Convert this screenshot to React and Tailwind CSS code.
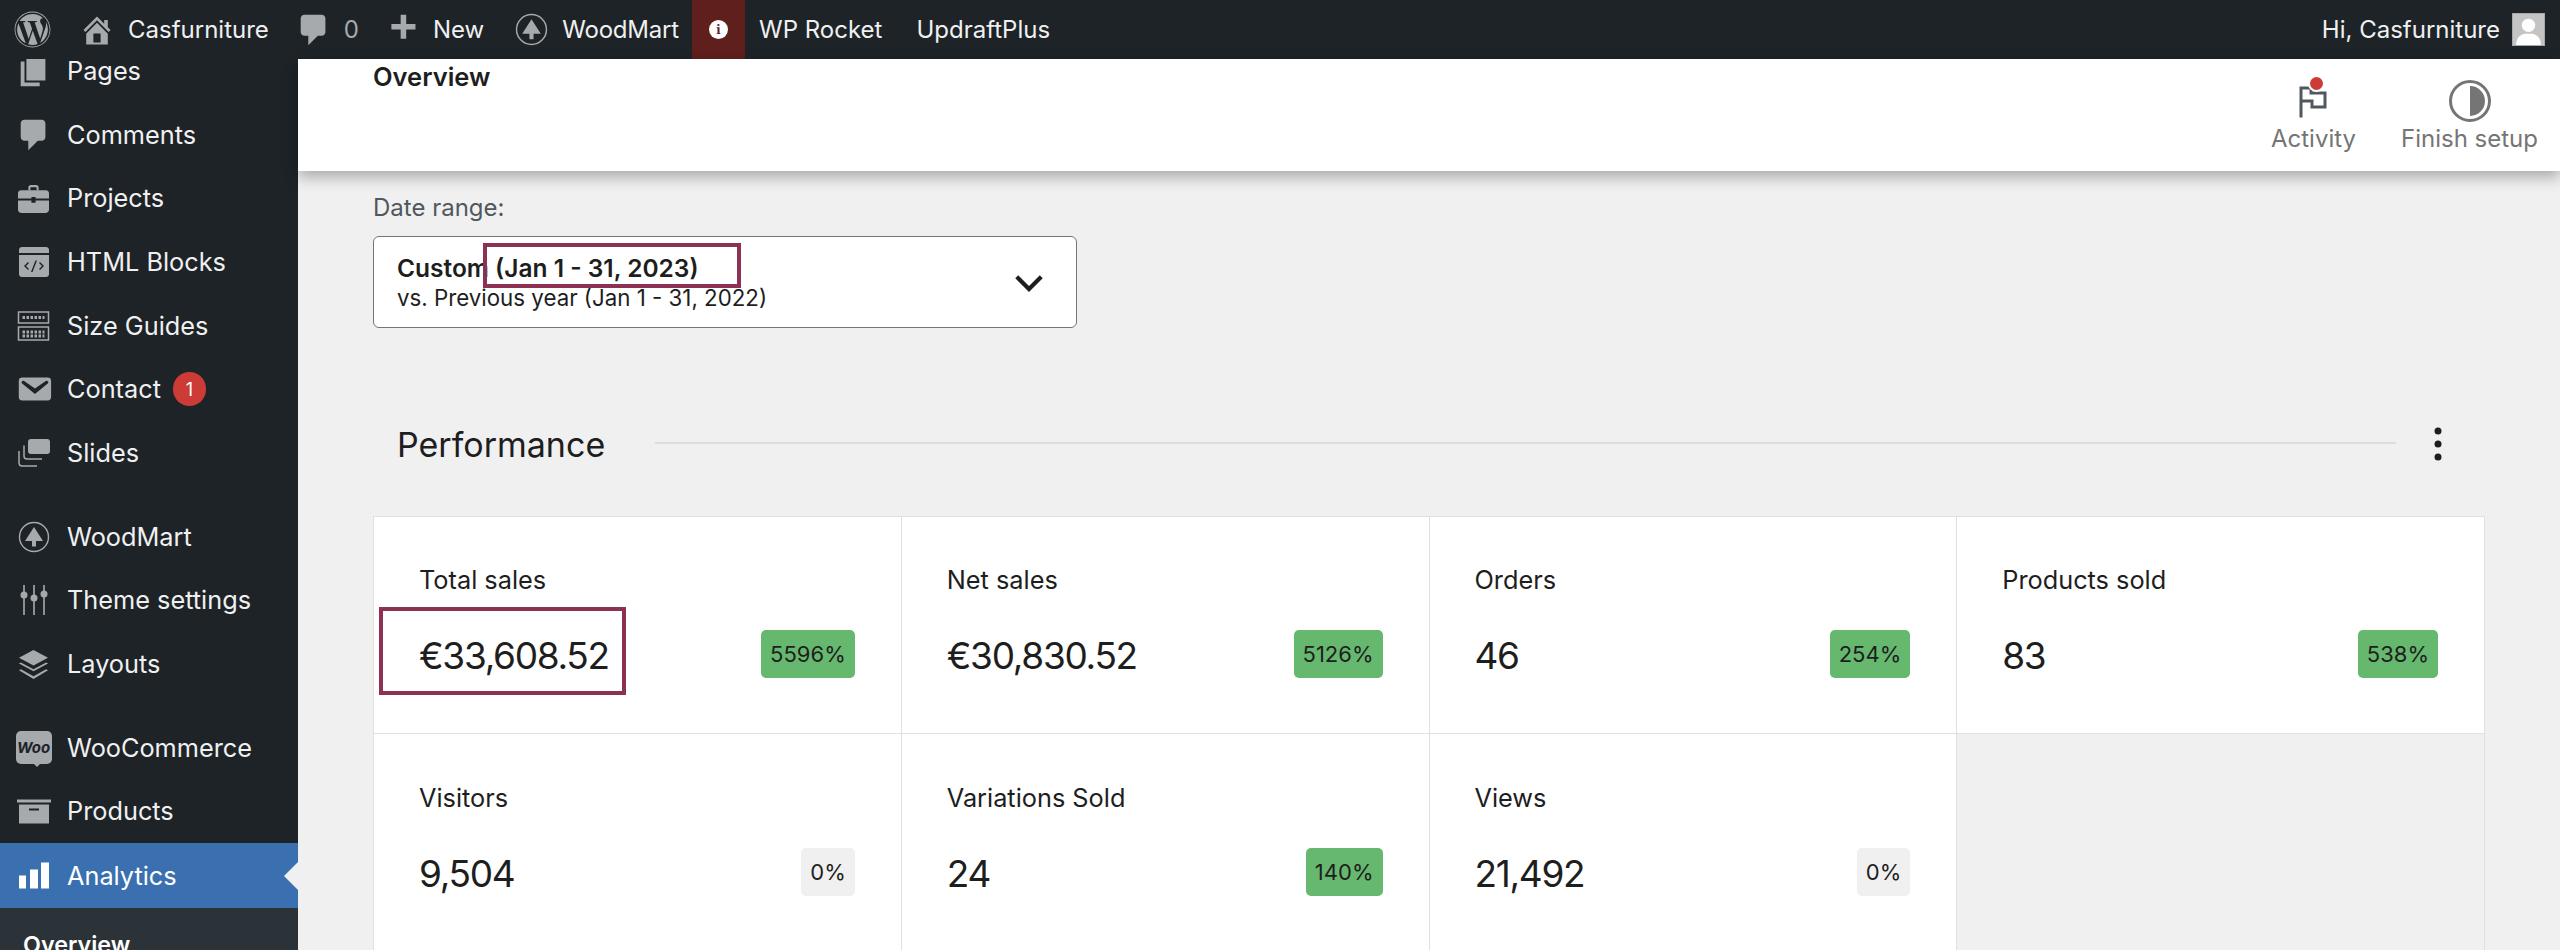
import { FaWordpress } from 'react-icons/fa';

const font = { fontFamily: 'Inter, "Liberation Sans", sans-serif' };

const Dash = ({ d, className }) => (
  <svg viewBox="0 0 20 20" className={className} fill="currentColor">
    <path d={d} />
  </svg>
);

const HOME = 'M16 8.5l1.53 1.53-1.06 1.06L10 4.62l-6.47 6.47-1.06-1.06L10 2.5l4 4v-2h2v4zm-6-2.46l6 5.99V18H4v-5.97zM12 17v-5H8v5h4z';
const COMMENT = 'M5 2h9c1.1 0 2 .9 2 2v7c0 1.1-.9 2-2 2h-2l-5 5v-5H5c-1.1 0-2-.9-2-2V4c0-1.1.9-2 2-2z';
const PLUS = 'M17 7v3h-5v5H9v-5H4V7h5V2h3v5h5z';
const PAGE = 'M6 15V2h10v13H6zm-1 1h8v2H3V5h2v11z';
const MAIL = 'M3.87 4h13.25C18.37 4 19 4.59 19 5.79v8.42c0 1.19-.63 1.79-1.88 1.79H3.87c-1.25 0-1.88-.6-1.88-1.79V5.79c0-1.2.63-1.79 1.88-1.79zm6.62 8.6l6.74-5.53c.24-.2.43-.66.13-1.07-.29-.41-.82-.42-1.17-.17l-5.7 3.86L4.8 5.83c-.35-.25-.88-.24-1.17.17-.3.41-.11.87.13 1.07z';

const TreeIcon = ({ className }) => (
  <svg viewBox="0 0 32 32" className={className} fill="none">
    <circle cx="16" cy="16" r="14.5" stroke="currentColor" strokeWidth="1.4" />
    <path d="M16 6L25 20H18V25.500H14V20H7z" fill="currentColor" />
  </svg>
);

const ProjectsIcon = ({ className }) => (
  <svg viewBox="0 0 30 28" className={className} fill="currentColor">
    <path d="M10 6V3.5C10 2 11 1 12.5 1h5C19 1 20 2 20 3.5V6h-2V3.5c0-.3-.2-.5-.5-.5h-5c-.3 0-.5.2-.5.5V6z" />
    <path d="M3 6h24c1.5 0 3 1.2 3 3v5H17v-1.5h-4V14H0V9c0-1.800 1.500-3 3-3z" />
    <path d="M0 16h13v2h4v-2h13v9c0 1.500-1.500 3-3 3H3c-1.500 0-3-1.500-3-3z" />
  </svg>
);

const HtmlIcon = ({ className }) => (
  <svg viewBox="0 0 30 30" className={className} fill="currentColor">
    <path d="M3 0h24c1.700 0 3 1.300 3 3v3H0V3c0-1.700 1.300-3 3-3z" />
    <path fillRule="evenodd" d="M0 8h30v19c0 1.700-1.300 3-3 3H3c-1.700 0-3-1.300-3-3zm9 7l-4 4 4 4 1-1-3-3 3-3zm12 0l-1 1 3 3-3 3 1 1 4-4zM16.500 13.500L12 25h1.500L18 13.500z" />
  </svg>
);

const SizeIcon = ({ className }) => (
  <svg viewBox="0 0 32 30" className={className} fill="none" stroke="currentColor" strokeWidth="1.500">
    <rect x="1" y="1" width="30" height="11" />
    <rect x="1" y="16" width="30" height="13" />
    <path d="M5 6.500h22M5 21h22M5 25h22" strokeWidth="3" strokeDasharray="2.500 1.500" />
  </svg>
);

const SlidesIcon = ({ className }) => (
  <svg viewBox="0 0 32 28" className={className} fill="none" stroke="currentColor" strokeWidth="1.500">
    <rect x="10" y="0" width="22" height="15" rx="3" fill="currentColor" stroke="none" />
    <path d="M6 6.500V17c0 2 1 3 3 3h15" />
    <path d="M1 12v11.500c0 2 1 3.500 3 3.500h15" />
  </svg>
);

const SlidersIcon = ({ className }) => (
  <svg viewBox="0 0 30 30" className={className} fill="currentColor">
    <path d="M4.200 0h1.600v30H4.200zM14.200 0h1.600v30h-1.600zM24.200 0h1.600v30h-1.600z" />
    <circle cx="5" cy="10" r="3.500" />
    <circle cx="15" cy="13" r="3.500" />
    <circle cx="25" cy="9" r="3.500" />
  </svg>
);

const LayersIcon = ({ className }) => (
  <svg viewBox="0 0 32 32" className={className} fill="currentColor">
    <path d="M16 1l15 8-15 8-15-8z" />
    <path d="M1 15l2-1 13 7 13-7 2 1-15 8z" />
    <path d="M1 22l2-1 13 7 13-7 2 1-15 9z" />
  </svg>
);

const WooIcon = ({ className }) => (
  <div className={`relative flex items-center justify-center rounded-[5px] bg-[#a7aaad] ${className}`}>
    <span className="text-[15px] font-bold italic leading-none text-[#1d2327]">Woo</span>
    <span className="absolute bottom-[-3px] left-[17px] h-0 w-0 border-x-[4px] border-t-[4px] border-x-transparent border-t-[#a7aaad]" />
  </div>
);

const ProductsIcon = ({ className }) => (
  <svg viewBox="0 0 34 24" className={className} fill="currentColor">
    <path d="M0 0h34v3H0z" />
    <path fillRule="evenodd" d="M2 5h30v19H2zm10 4v2h10V9z" />
  </svg>
);

const BarsIcon = ({ className }) => (
  <svg viewBox="0 0 30 26" className={className} fill="currentColor">
    <path d="M0 13h7v13H0zM11 7h8v19h-8zM22 0h8v26h-8z" />
  </svg>
);

const MenuItem = ({ icon, label, badge }) => (
  <div className="flex h-[63.7px] items-center">
    <div className="flex w-[67px] shrink-0 items-center justify-center text-[#a7aaad]">{icon}</div>
    <span className="text-[25.3px] text-[#f0f0f1]">{label}</span>
    {badge && (
      <span className="ml-[12px] flex h-[34px] w-[33px] items-center justify-center rounded-full bg-[#cc3b36] text-[18px] text-white">
        {badge}
      </span>
    )}
  </div>
);

const Sidebar = () => (
  <aside className="flex w-[298px] shrink-0 flex-col overflow-hidden bg-[#1d2327]">
    <div className="-mt-[20px]">
      <MenuItem icon={<Dash d={PAGE} className="h-[38px] w-[38px]" />} label="Pages" />
      <MenuItem icon={<Dash d={COMMENT} className="h-[38px] w-[38px]" />} label="Comments" />
      <MenuItem icon={<ProjectsIcon className="h-[29px] w-[31px]" />} label="Projects" />
      <MenuItem icon={<HtmlIcon className="h-[30px] w-[30px]" />} label="HTML Blocks" />
      <MenuItem icon={<SizeIcon className="h-[30px] w-[33px]" />} label="Size Guides" />
      <MenuItem icon={<Dash d={MAIL} className="h-[38px] w-[38px]" />} label="Contact" badge="1" />
      <MenuItem icon={<SlidesIcon className="h-[28px] w-[32px]" />} label="Slides" />
      <div className="h-[20px]" />
      <MenuItem icon={<TreeIcon className="h-[32px] w-[32px]" />} label="WoodMart" />
      <MenuItem icon={<SlidersIcon className="h-[30px] w-[30px]" />} label="Theme settings" />
      <MenuItem icon={<LayersIcon className="h-[31px] w-[31px]" />} label="Layouts" />
      <div className="h-[20px]" />
      <MenuItem icon={<WooIcon className="h-[33px] w-[36px]" />} label="WooCommerce" />
      <MenuItem icon={<ProductsIcon className="h-[25px] w-[34px]" />} label="Products" />
      <div className="relative flex h-[65px] items-center bg-[#3b70b0]">
        <div className="flex w-[67px] shrink-0 items-center justify-center text-white">
          <BarsIcon className="h-[29px] w-[30px]" />
        </div>
        <span className="text-[25.3px] text-white">Analytics</span>
        <span className="absolute right-0 top-[19px] h-0 w-0 border-y-[14px] border-r-[14px] border-y-transparent border-r-[#f0f0f1]" />
      </div>
      <div className="h-[60px] bg-[#2c3338] pl-[23px] pt-[22px] text-[23.3px] font-semibold leading-[30px] text-white">Overview</div>
    </div>
  </aside>
);

const TopBar = () => (
  <header className="flex h-[59px] shrink-0 items-center bg-[#1d2327] text-[24px] text-[#f0f0f1]">
    <div className="flex w-[64px] justify-center text-[#a7aaad]">
      <FaWordpress className="h-[37px] w-[37px]" />
    </div>
    <div className="flex items-center pl-[15px]">
      <Dash d={HOME} className="mr-[13px] h-[36px] w-[36px] text-[#a7aaad]" />
      <span>Casfurniture</span>
    </div>
    <div className="ml-[26px] flex items-center">
      <Dash d={COMMENT} className="h-[38px] w-[38px] text-[#a7aaad]" />
      <span className="ml-[11px] text-[#a7aaad]">0</span>
    </div>
    <div className="ml-[25px] flex items-center">
      <Dash d={PLUS} className="mr-[12px] h-[37px] w-[37px] text-[#a7aaad]" />
      <span>New</span>
    </div>
    <div className="ml-[31px] flex items-center">
      <TreeIcon className="mr-[14px] h-[33px] w-[33px] text-[#a7aaad]" />
      <span className="tracking-[-0.2px]">WoodMart</span>
    </div>
    <div className="ml-[13px] flex h-full w-[53px] items-center justify-center bg-[#5f1f1c]">
      <span className="flex h-[19px] w-[19px] items-center justify-center rounded-full bg-white font-serif text-[14px] font-bold text-[#5f1f1c]">i</span>
    </div>
    <span className="ml-[14px]">WP Rocket</span>
    <span className="ml-[34px]">UpdraftPlus</span>
    <div className="ml-auto flex items-center pr-[15px]">
      <span>Hi, Casfurniture</span>
      <div className="ml-[12px] flex h-[33px] w-[33px] items-end justify-center overflow-hidden border border-[#a7aaad] bg-[#c4c4c4]">
        <svg viewBox="0 0 30 30" className="h-full w-full" fill="#fff">
          <circle cx="15" cy="11" r="6.500" />
          <path d="M3 30c0-7 4-10 8-11h8c4 1 8 4 8 11z" />
        </svg>
      </div>
    </div>
  </header>
);

const PageHeader = () => (
  <div className="relative z-10 flex h-[112px] shrink-0 justify-between bg-white pl-[75px] shadow-[0_6px_14px_rgba(0,0,0,0.3)]">
    <h1 className="pt-[3px] text-[25.5px] font-semibold leading-[30px] text-[#1e1e1e]">Overview</h1>
    <div className="flex pr-[22px] text-[#757575]">
      <div className="mr-[45px] flex flex-col items-center pt-[21px]">
        <div className="relative mt-[6px] h-[36px] w-[28px]">
          <svg viewBox="0 0 28 36" className="h-[36px] w-[28px]" fill="none" stroke="#50575e" strokeWidth="3">
            <path d="M2 31.500V2H12V7H26V21H13V15H2" />
          </svg>
          <span className="absolute left-[11px] top-[-9px] h-[13px] w-[13px] rounded-full bg-[#cc3b36] ring-2 ring-white" />
        </div>
        <span className="mt-[3px] text-[24px] leading-[28px]">Activity</span>
      </div>
      <div className="flex flex-col items-center pt-[21px]">
        <svg viewBox="0 0 42 42" className="h-[42px] w-[42px]">
          <circle cx="21" cy="21" r="19.500" fill="none" stroke="#757575" strokeWidth="3" />
          <path d="M21 6a15 15 0 0 1 0 30z" fill="#757575" />
        </svg>
        <span className="mt-[3px] text-[24px] leading-[28px]">Finish setup</span>
      </div>
    </div>
  </div>
);

const DateRange = () => (
  <div className="w-[704px]">
    <div className="mb-[14px] text-[24px] leading-[28px] text-[#50575e]">Date range:</div>
    <div className="relative flex h-[92px] items-center justify-between rounded-[6px] border border-[#757575] bg-white pl-[23px] pr-[26px]">
      <div className="pt-[2px] text-[#1e1e1e]">
        <div className="text-[24.5px] font-semibold leading-[30px]">Custom (Jan 1 - 31, 2023)</div>
        <div className="text-[22.3px] leading-[30px]">vs. Previous year (Jan 1 - 31, 2022)</div>
      </div>
      <svg viewBox="0 0 24 24" className="h-[42px] w-[42px]" fill="none" stroke="#1e1e1e" strokeWidth="2.400">
        <path d="M5 9l7 7 7-7" />
      </svg>
      <div className="absolute left-[109px] top-[6px] h-[45px] w-[258px] border-4 border-[#8c3154]" />
    </div>
  </div>
);

const cards = [
  { label: 'Total sales', value: '€33,608.52', delta: '5596%', up: true, marked: true },
  { label: 'Net sales', value: '€30,830.52', delta: '5126%', up: true },
  { label: 'Orders', value: '46', delta: '254%', up: true },
  { label: 'Products sold', value: '83', delta: '538%', up: true },
  { label: 'Visitors', value: '9,504', delta: '0%', low: true },
  { label: 'Variations Sold', value: '24', delta: '140%', up: true, low: true },
  { label: 'Views', value: '21,492', delta: '0%', low: true },
];

const Card = ({ label, value, delta, up, marked, low }) => (
  <div className={`relative flex h-[217px] flex-col border-b border-r border-[#e0e0e0] bg-white pl-[45px] pr-[46px] ${low ? 'pt-[49px]' : 'pt-[48px]'}`}>
    <div className="text-[25.3px] leading-[30px] text-[#1e1e1e]">{label}</div>
    <div className="mt-[33px] flex items-center justify-between">
      <span className="mt-[4px] text-[37px] leading-[48px] tracking-[-1.3px] text-[#1e1e1e]">{value}</span>
      <span className={`flex h-[48px] items-center rounded-[5px] px-[9px] text-[22px] text-[#1e1e1e] ${up ? 'bg-[#66b86f]' : 'bg-[#f0f0f1]'}`}>
        {delta}
      </span>
    </div>
    {marked && <div className="absolute left-[5px] top-[90px] h-[88px] w-[247px] border-4 border-[#8c3154]" />}
  </div>
);

const Performance = () => (
  <section className="mt-[88px]">
    <div className="flex h-[60px] items-center pl-[24px] pr-[43px]">
      <h2 className="mb-[3px] text-[34px] font-normal text-[#1e1e1e]">Performance</h2>
      <div className="mb-[6px] ml-[50px] mr-[38px] h-[2px] flex-1 bg-[#dcdcdc]" />
      <svg viewBox="0 0 8 34" className="mb-[4px] h-[34px] w-[8px]" fill="#1e1e1e">
        <circle cx="4" cy="4" r="3.500" />
        <circle cx="4" cy="17" r="3.500" />
        <circle cx="4" cy="30" r="3.500" />
      </svg>
    </div>
    <div className="mt-[40px] grid grid-cols-4 border-l border-t border-[#e0e0e0]">
      {cards.map((c) => (
        <Card key={c.label} {...c} />
      ))}
      <div className="h-[217px] border-b border-r border-[#e0e0e0]" />
    </div>
  </section>
);

export default function App() {
  return (
    <div className="flex h-[950px] w-[2560px] flex-col overflow-hidden bg-[#f0f0f1]" style={font}>
      <TopBar />
      <div className="flex min-h-0 flex-1">
        <Sidebar />
        <main className="flex min-w-0 flex-1 flex-col">
          <PageHeader />
          <div className="pl-[75px] pr-[75px] pt-[23px]">
            <DateRange />
            <Performance />
          </div>
        </main>
      </div>
    </div>
  );
}
